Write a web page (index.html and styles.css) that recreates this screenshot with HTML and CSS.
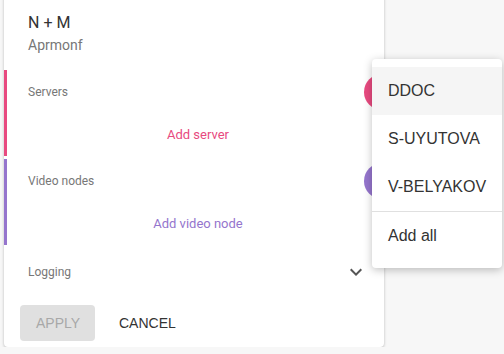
FILE: index.html
```html
<!DOCTYPE html>
<html lang="en">

<head>
    <meta charset="UTF-8">
    <meta name="viewport" content="width=device-width, initial-scale=1.0">
    <title>N + M</title>
    <link rel="stylesheet" href="styles.css">
</head>

<body>

    <div class="card">
        <div class="card-header">
            <div class="card-title">N + M</div>
            <div class="card-subtitle">Aprmonf</div>
        </div>

        <div class="group group-servers">
            <div class="group-row">
                <span class="group-label">Servers</span>
                <span class="group-avatar"></span>
            </div>
            <button class="add-button">Add server</button>
        </div>

        <div class="group group-video">
            <div class="group-row">
                <span class="group-label">Video nodes</span>
                <span class="group-avatar"></span>
            </div>
            <button class="add-button">Add video node</button>
        </div>

        <div class="logging-row">
            <span class="group-label">Logging</span>
            <svg class="chevron" width="24" height="24" viewBox="0 0 24 24">
                <path d="M7.41 8.59L12 13.17l4.59-4.58L18 10l-6 6-6-6 1.41-1.41z" fill="#555"/>
            </svg>
        </div>

        <div class="card-actions">
            <button class="btn btn-apply" disabled>Apply</button>
            <button class="btn btn-cancel">Cancel</button>
        </div>
    </div>

    <div class="menu">
        <div class="menu-item active">DDOC</div>
        <div class="menu-item">S-UYUTOVA</div>
        <div class="menu-item">V-BELYAKOV</div>
        <div class="menu-divider"></div>
        <div class="menu-item">Add all</div>
    </div>

</body>

</html>
```

FILE: styles.css
```css
body {
    font-family: Roboto, "Liberation Sans", Arial, sans-serif;
    margin: 0;
    background-color: #f7f7f7;
    color: #333;
    overflow: hidden;
}

.card {
    width: 380px;
    margin: -10px 0 0 4px;
    padding-top: 21px;
    padding-bottom: 6px;
    background-color: white;
    border-radius: 4px;
    box-shadow: 0 1px 3px rgba(0, 0, 0, 0.25);
}

.card-header {
    padding: 0 24px;
    margin-bottom: 15px;
}

.card-title {
    font-size: 16px;
    line-height: 24px;
    color: #333;
}

.card-subtitle {
    font-size: 14px;
    line-height: 20px;
    color: #777;
}

.group {
    height: 86px;
    border-left: 3px solid;
    padding: 4px 16px 0 21px;
    box-sizing: border-box;
    margin-bottom: 3px;
}

.group-servers {
    border-color: #e84a80;
}

.group-video {
    border-color: #9575cd;
}

.group-row {
    position: relative;
    display: flex;
    align-items: center;
    height: 36px;
}

.group-label {
    font-size: 12px;
    color: #777;
}

.group-avatar {
    position: absolute;
    right: -32px;
    top: 0;
    width: 36px;
    height: 36px;
    border-radius: 50%;
}

.group-servers .group-avatar {
    background-color: #e84a80;
}

.group-video .group-avatar {
    background-color: #9575cd;
}

.add-button {
    display: block;
    margin: 6px auto 0;
    height: 36px;
    padding: 0 16px;
    border: none;
    background: none;
    font-family: inherit;
    font-size: 13px;
    cursor: pointer;
}

.group-servers .add-button {
    color: #e84a80;
}

.group-video .add-button {
    color: #9575cd;
}

.logging-row {
    display: flex;
    align-items: center;
    justify-content: space-between;
    height: 48px;
    padding: 0 16px 0 24px;
}

.card-actions {
    display: flex;
    gap: 8px;
    padding: 9px 16px 0;
}

.btn {
    height: 36px;
    padding: 0 16px;
    border: none;
    border-radius: 4px;
    font-family: "Liberation Sans", Arial, sans-serif;
    font-size: 14px;
    text-transform: uppercase;
    background: none;
    color: #333;
    cursor: pointer;
}

.btn-apply {
    width: 75px;
    background-color: #e0e0e0;
    color: #a8a8a8;
    cursor: default;
}

.menu {
    position: absolute;
    left: 372px;
    top: 59px;
    width: 130px;
    padding: 8px 0;
    background-color: white;
    border-radius: 4px;
    box-shadow: 0 2px 8px rgba(0, 0, 0, 0.25);
    font-family: "Liberation Sans", Arial, sans-serif;
}

.menu-item {
    height: 48px;
    line-height: 48px;
    padding: 0 16px;
    font-size: 16px;
    color: #333;
    white-space: nowrap;
}

.menu-item.active {
    background-color: #f5f5f5;
}

.menu-divider {
    height: 1px;
    background-color: #e0e0e0;
}
```
